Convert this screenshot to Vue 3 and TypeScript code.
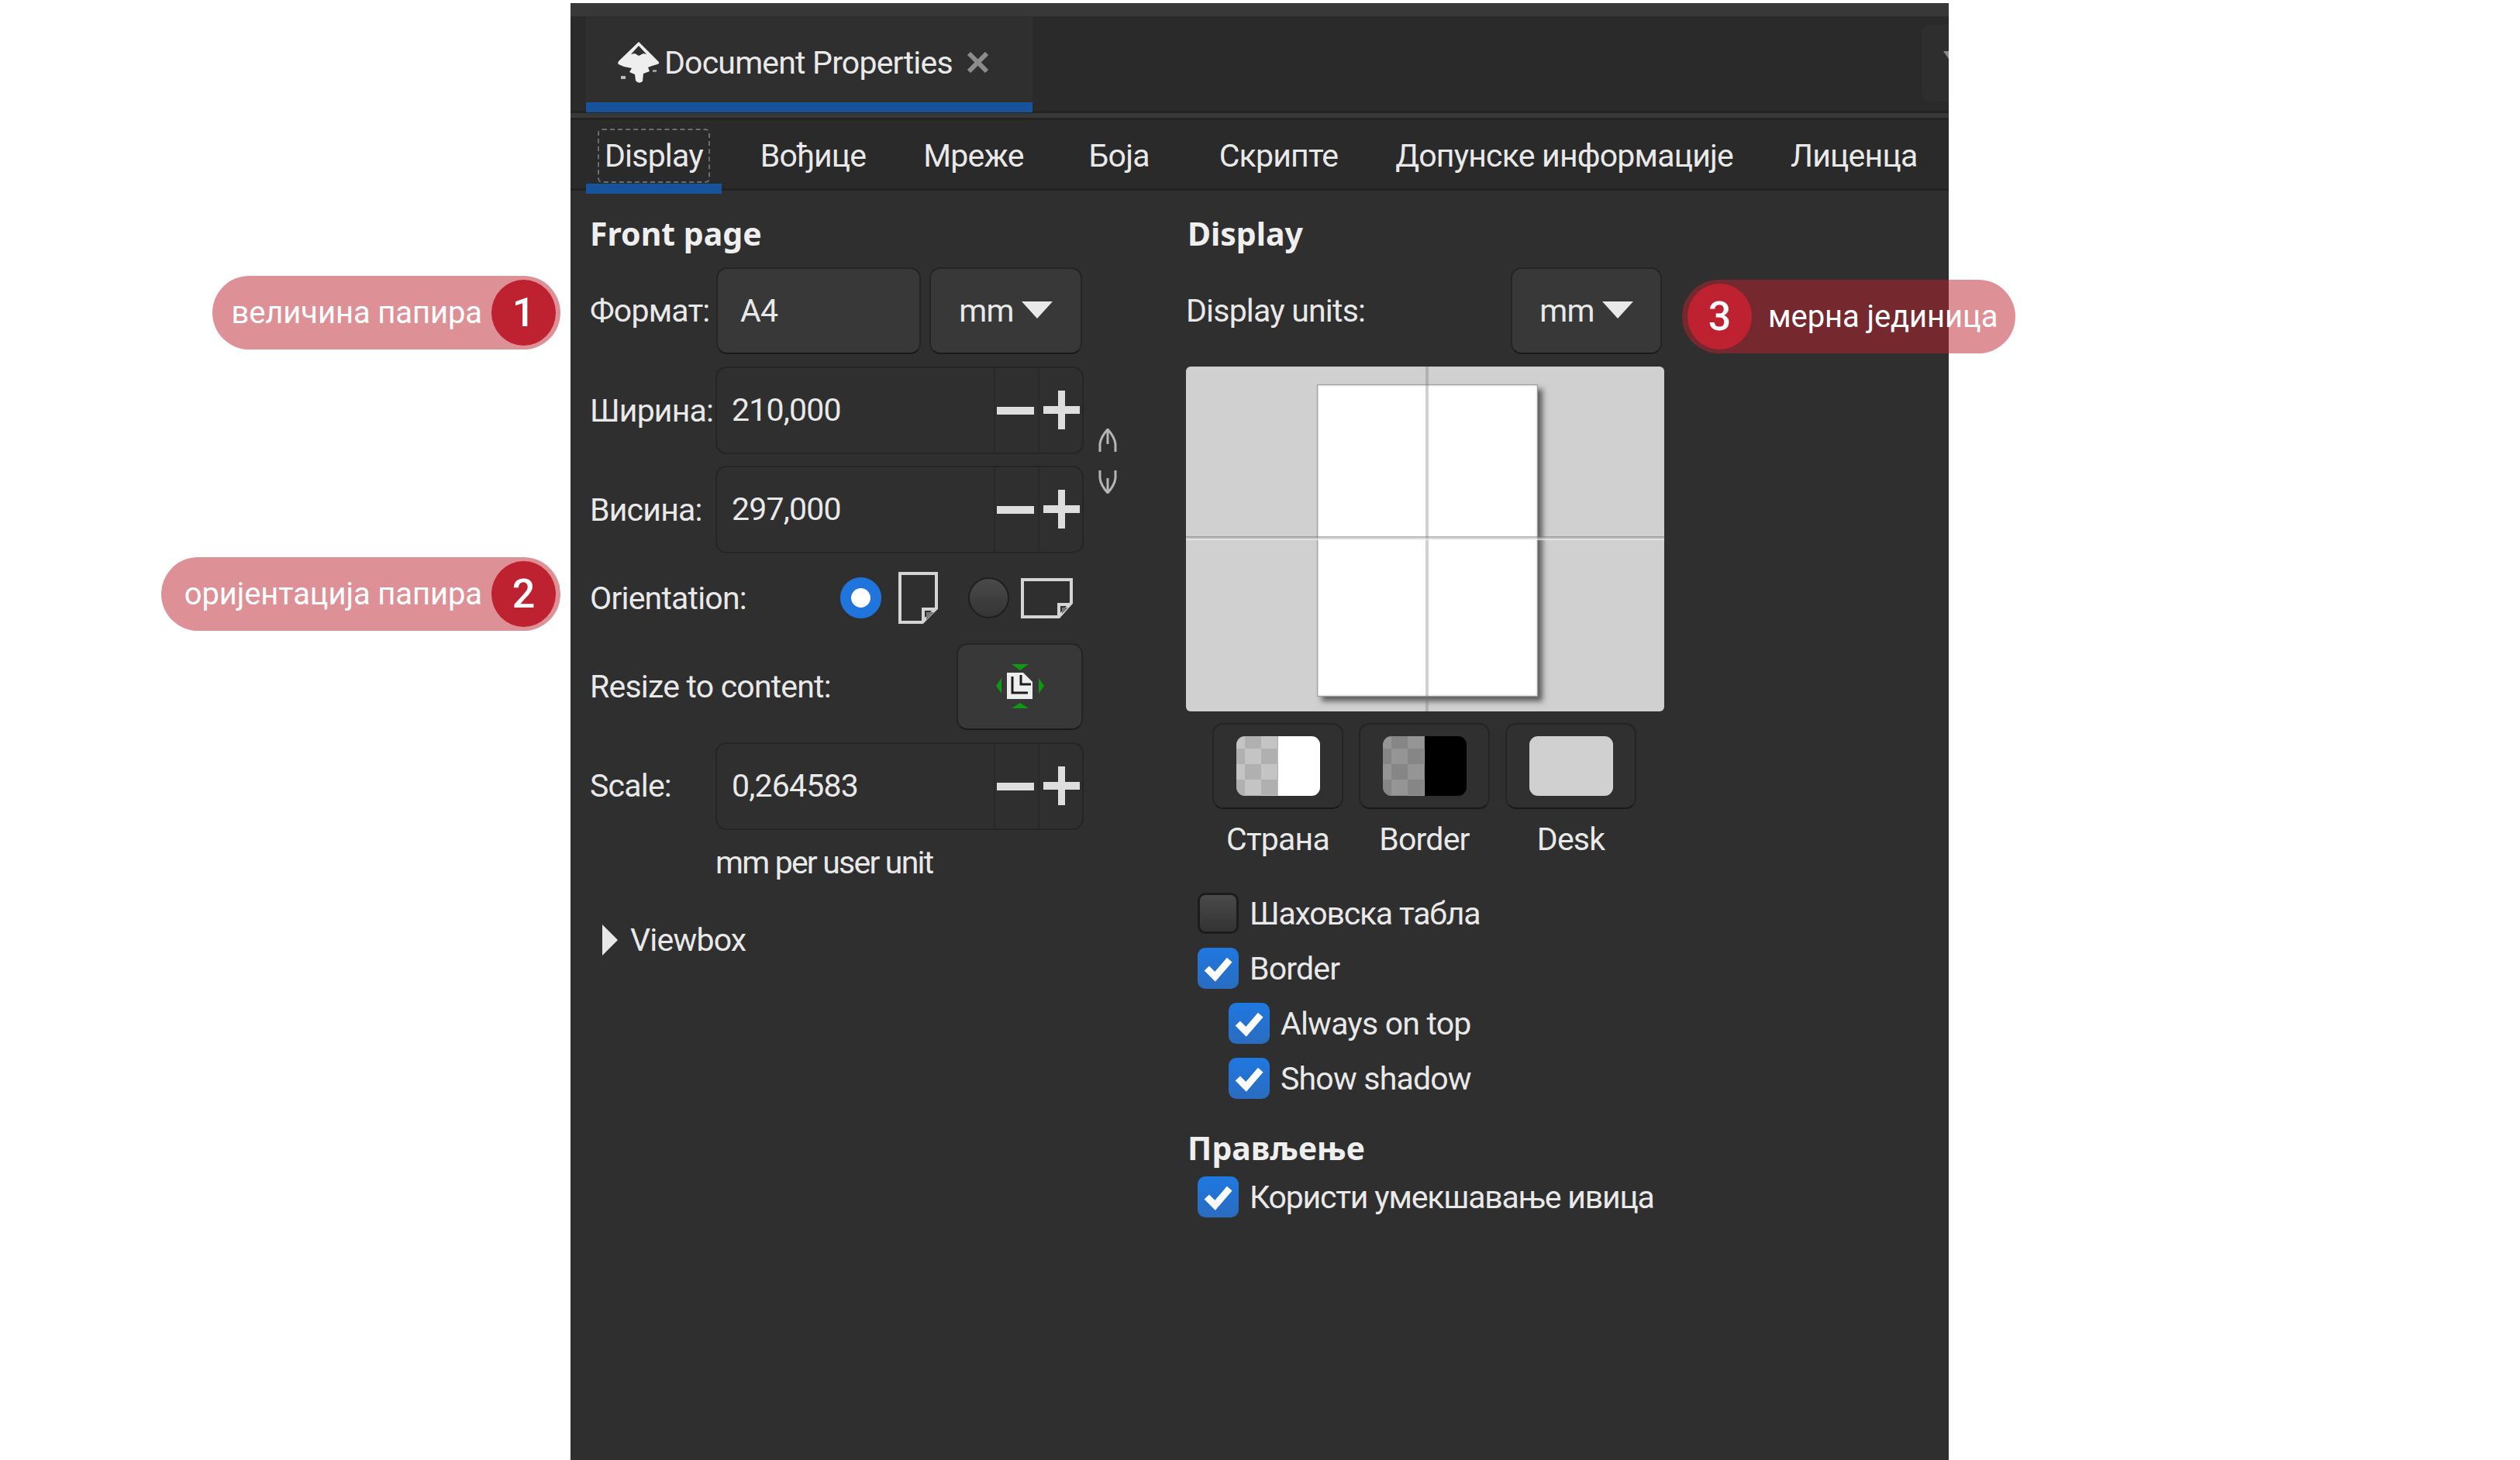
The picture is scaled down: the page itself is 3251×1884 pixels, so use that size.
<script setup lang="ts">
const tabs = [
  { label: 'Display', active: true },
  { label: 'Вођице' },
  { label: 'Мреже' },
  { label: 'Боја', wide: true },
  { label: 'Скрипте' },
  { label: 'Допунске информације' },
  { label: 'Лиценца' },
]
const spins = [
  { label: 'Ширина:', value: '210,000' },
  { label: 'Висина:', value: '297,000' },
]
const swatches = [
  { label: 'Страна', cls: 'sw-page' },
  { label: 'Border', cls: 'sw-border' },
  { label: 'Desk', cls: 'sw-desk' },
]
const borderChecks = [
  { label: 'Шаховска табла', checked: false, nested: false, tight: true },
  { label: 'Border', checked: true, nested: false, tight: false },
  { label: 'Always on top', checked: true, nested: true, tight: false },
  { label: 'Show shadow', checked: true, nested: true, tight: false },
]
</script>

<template>
  <div class="page">
    <div class="panel">
      <div class="strip"></div>
      <div class="dock-bar">
        <div class="dock-tab">
          <svg class="logo" viewBox="0 0 54 54" aria-hidden="true">
            <path d="M27 0 L52 25 Q55 28 51 29 L44 31 L39 33 L41 38 L33 41 L32 51 Q27 55 23 50 L22 42 L15 39 L18 34 L8 32 L1 29 Q-1 27 2 24 Z" fill="#eeeeee" />
            <path d="M27 5 L17 16 L22 15 L27 18 L33 15 L37 16 Z" fill="#2f2f2f" />
            <rect x="4" y="44" width="6" height="4" fill="#bbbbbb" />
            <rect x="45" y="36" width="5" height="3" fill="#999999" />
          </svg>
          <span class="dock-title">Document Properties</span>
          <svg class="close" viewBox="0 0 29 27" aria-hidden="true">
            <path d="M3 2 L26 25 M26 2 L3 25" stroke="#8c8c8c" stroke-width="6" fill="none" />
          </svg>
        </div>
        <div class="dock-spacer"></div>
        <div class="dock-menu"><i class="menu-caret"></i></div>
      </div>
      <div class="separator"></div>
      <div class="tabs">
        <div v-for="t in tabs" :key="t.label" class="tab" :class="{ active: t.active, wide: t.wide }">
          {{ t.label }}
        </div>
      </div>

      <div class="columns">
        <section class="col-left">
          <h3 class="heading">Front page</h3>
          <div class="row first-row">
            <span class="label">Формат:</span>
            <div class="field combo-entry">A4</div>
            <div class="field combo">
              <span>mm</span><i class="caret"></i>
            </div>
          </div>

          <div v-for="s in spins" :key="s.label" class="row spin-row">
            <span class="label">{{ s.label }}</span>
            <div class="spin">
              <span class="spin-value">{{ s.value }}</span>
              <span class="spin-btn"><i class="minus"></i></span>
              <span class="spin-btn"><i class="plus"></i></span>
            </div>
          </div>

          <div class="row orient-row">
            <span class="label">Orientation:</span>
            <span class="radio on"></span>
            <svg class="portrait" viewBox="0 0 51 67" aria-hidden="true">
              <path d="M2 2 H49 V47 L31 65 H2 Z" fill="none" stroke="#d4d4d4" stroke-width="4" />
              <path d="M32 64 V48 H48" fill="none" stroke="#d4d4d4" stroke-width="4" />
              <path d="M36 52 H46 L36 62 Z" fill="#777" />
            </svg>
            <span class="radio"></span>
            <svg class="landscape" viewBox="0 0 67 53" aria-hidden="true">
              <path d="M2 3 H65 V33 L49 51 H2 Z" fill="none" stroke="#d4d4d4" stroke-width="4" />
              <path d="M49 50 V35 H64" fill="none" stroke="#d4d4d4" stroke-width="4" />
              <path d="M53 39 H61 L53 47 Z" fill="#777" />
            </svg>
          </div>

          <div class="row resize-row">
            <span class="label">Resize to content:</span>
            <div class="field resize-btn">
              <svg viewBox="0 0 62 58" aria-hidden="true">
                <path d="M14 11 H35 L47 23 V45 H14 Z" fill="#eeeeee" />
                <path d="M21 16 V37 H41 M32 14 V26 H45" fill="none" stroke="#1c1c1c" stroke-width="3" />
                <path d="M20 0 H42 L31 8 Z M20 57 H42 L31 50 Z M7 18 V38 L0 28 Z M55 18 V38 L62 28 Z" fill="#0d9a12" />
              </svg>
            </div>
          </div>

          <div class="row scale-row">
            <span class="label">Scale:</span>
            <div class="spin">
              <span class="spin-value">0,264583</span>
              <span class="spin-btn"><i class="minus"></i></span>
              <span class="spin-btn"><i class="plus"></i></span>
            </div>
          </div>
          <div class="unit-note">mm per user unit</div>

          <div class="viewbox">
            <i class="arrow"></i>
            <span>Viewbox</span>
          </div>

          <svg class="chain chain-top" viewBox="0 0 26 30" aria-hidden="true">
            <path d="M3 30 V20 Q4 11 13 1 Q22 11 23 20 V30 M13 1 V20" fill="none" stroke="#b5b5b5" stroke-width="3" />
          </svg>
          <svg class="chain chain-bottom" viewBox="0 0 26 30" aria-hidden="true">
            <path d="M3 0 V10 Q4 19 13 29 Q22 19 23 10 V0 M13 29 V10" fill="none" stroke="#b5b5b5" stroke-width="3" />
          </svg>
        </section>

        <section class="col-right">
          <h3 class="heading">Display</h3>
          <div class="row first-row units-row">
            <span class="label">Display units:</span>
            <div class="field combo units">
              <span>mm</span><i class="caret"></i>
            </div>
          </div>

          <div class="preview">
            <div class="sheet"></div>
            <i class="guide-v"></i>
            <i class="guide-h"></i>
          </div>

          <div class="swatches">
            <div v-for="s in swatches" :key="s.label" class="swatch-item">
              <div class="field swatch-btn"><i class="swatch" :class="s.cls"></i></div>
              <span class="swatch-label">{{ s.label }}</span>
            </div>
          </div>

          <div class="checks">
            <label v-for="c in borderChecks" :key="c.label" class="check" :class="{ nested: c.nested, tight: c.tight }">
              <span class="box" :class="{ on: c.checked }">
                <svg v-if="c.checked" viewBox="0 0 54 54" aria-hidden="true">
                  <path d="M12 27 L23 38 L42 16" fill="none" stroke="#fff" stroke-width="9" />
                </svg>
              </span>
              {{ c.label }}
            </label>
          </div>

          <h3 class="heading render-heading">Прављење</h3>
          <label class="check tight">
            <span class="box on">
              <svg viewBox="0 0 54 54" aria-hidden="true">
                <path d="M12 27 L23 38 L42 16" fill="none" stroke="#fff" stroke-width="9" />
              </svg>
            </span>
            Користи умекшавање ивица
          </label>
        </section>
      </div>

      <div class="callout c1"><span class="c-text">величина папира</span><b class="c-num">1</b></div>
      <div class="callout c2"><span class="c-text">оријентација папира</span><b class="c-num">2</b></div>
      <div class="callout c3"><b class="c-num">3</b><span class="c-text">мерна јединица</span></div>
    </div>
  </div>
</template>

<style>
html,
body {
  margin: 0;
  background: #fff;
  overflow: hidden;
}
</style>

<style scoped>
.page {
  width: 3251px;
  height: 1884px;
  padding: 4px 0 0 736px;
  box-sizing: border-box;
  background: #fff;
  font-family: Roboto, "Noto Sans", sans-serif;
  font-size: 41px;
  letter-spacing: -0.8px;
  color: #e9e9e9;
}
.panel {
  position: relative;
  width: 1778px;
  height: 1880px;
  background: #2f2f2f;
}
.strip {
  height: 17px;
  background: #383838;
}
.dock-bar {
  display: flex;
  height: 122px;
  background: #2a2a2a;
  padding-left: 20px;
  border-bottom: 3px solid #232323;
}
.dock-tab {
  display: flex;
  align-items: center;
  width: 576px;
  height: 124px;
  box-sizing: border-box;
  padding: 8px 0 0 41px;
  background: #2f2f2f;
  border-bottom: 13px solid #17539b;
}
.logo {
  width: 54px;
  height: 54px;
  margin-right: 6px;
}
.dock-title {
  white-space: nowrap;
}
.close {
  width: 29px;
  height: 27px;
  margin-left: 18px;
}
.dock-spacer {
  flex: 1;
}
.dock-menu {
  position: relative;
  width: 35px;
  height: 99px;
  margin-top: 11px;
  background: #2e2e2e;
  border-radius: 10px 0 0 10px;
  overflow: hidden;
}
.menu-caret {
  position: absolute;
  left: 28px;
  top: 34px;
  width: 0;
  height: 0;
  border-style: solid;
  border-width: 10px 7px 0;
  border-color: #8a8a8a transparent transparent;
}
.separator {
  height: 6px;
  background: #383838;
  border-bottom: 3px solid #232323;
}
.tabs {
  display: flex;
  gap: 74px;
  height: 88px;
  padding-left: 44px;
  background: #2a2a2a;
  border-bottom: 3px solid #222;
  line-height: 93px;
  white-space: nowrap;
}
.tab {
  position: relative;
}
.tab.wide {
  margin: 0 16px 0 10px;
}
.tab.active::before {
  content: "";
  position: absolute;
  left: -9px;
  right: -9px;
  top: 11px;
  bottom: 7px;
  border: 2px dashed #6d6d6d;
  border-radius: 6px;
}
.tab.active::after {
  content: "";
  position: absolute;
  left: -24px;
  right: -24px;
  top: 82px;
  height: 13px;
  background: #17539b;
}
.columns {
  display: grid;
  grid-template-columns: 769px 617px;
  padding: 24px 0 0 25px;
}
.col-left,
.col-right {
  position: relative;
  min-width: 0;
}
.heading {
  margin: 0;
  height: 75px;
  line-height: 62px;
  font-family: "Noto Sans", Roboto, sans-serif;
  font-size: 41px;
  font-weight: 700;
  letter-spacing: 0;
  color: #efefef;
}
.col-right > .heading {
  padding-left: 2px;
}
.row {
  display: flex;
  align-items: center;
}
.label {
  white-space: nowrap;
}
.field {
  box-sizing: border-box;
  display: flex;
  align-items: center;
  background: #383838;
  border: 2px solid #242424;
  border-bottom-color: #1a1a1a;
  border-radius: 14px;
}
.first-row {
  height: 112px;
}
.first-row .label {
  width: 163px;
}
.combo-entry {
  width: 264px;
  height: 112px;
  padding-left: 29px;
}
.combo {
  justify-content: center;
  width: 197px;
  height: 112px;
  margin-left: 11px;
  gap: 10px;
}
.caret {
  width: 0;
  height: 0;
  margin-top: -2px;
  border-style: solid;
  border-width: 22px 20px 0;
  border-color: #e9e9e9 transparent transparent;
}
.spin-row,
.scale-row {
  height: 113px;
  margin-top: 16px;
}
.spin-row .label,
.scale-row .label {
  width: 162px;
}
.spin-row + .spin-row {
  margin-top: 15px;
}
.spin {
  display: flex;
  width: 475px;
  height: 113px;
  box-sizing: border-box;
  border: 2px solid #252525;
  border-radius: 14px;
  background: #2f2f2f;
}
.spin-value {
  flex: 1;
  padding-left: 19px;
  line-height: 108px;
}
.spin-btn {
  position: relative;
  width: 55px;
  border-left: 2px solid #292929;
}
.minus,
.plus,
.plus::after {
  position: absolute;
  background: #dedede;
}
.minus {
  left: 2px;
  width: 48px;
  top: 50px;
  height: 10px;
}
.plus {
  left: 5px;
  width: 47px;
  top: 49px;
  height: 10px;
}
.plus::after {
  content: "";
  left: 19px;
  width: 9px;
  top: -20px;
  height: 50px;
}
.orient-row {
  height: 67px;
  margin-top: 24px;
}
.orient-row .label {
  width: 323px;
}
.radio {
  width: 53px;
  height: 53px;
  box-sizing: border-box;
  border: 2px solid #1f1f1f;
  border-radius: 50%;
  background: linear-gradient(#4a4a4a, #343434);
}
.radio.on {
  border: 14px solid #1f75dc;
  background: #fff;
}
.portrait {
  width: 51px;
  height: 67px;
  margin: 0 39px 0 22px;
}
.landscape {
  width: 67px;
  height: 53px;
  margin-left: 15px;
}
.resize-row {
  height: 112px;
  margin-top: 25px;
}
.resize-row .label {
  width: 473px;
}
.resize-btn {
  justify-content: center;
  width: 163px;
  height: 112px;
}
.resize-btn svg {
  width: 62px;
  height: 58px;
}
.scale-row {
  height: 112px;
}
.unit-note {
  margin: 16px 0 0 162px;
  line-height: 54px;
  letter-spacing: -1.8px;
}
.viewbox {
  display: flex;
  align-items: center;
  margin: 46px 0 0 16px;
  gap: 16px;
  line-height: 54px;
}
.arrow {
  width: 0;
  height: 0;
  border-style: solid;
  border-width: 20px 0 20px 20px;
  border-color: transparent transparent transparent #e8e8e8;
}
.chain {
  position: absolute;
  left: 655px;
  width: 26px;
  height: 30px;
}
.chain-top {
  top: 283px;
}
.chain-bottom {
  top: 337px;
}
.units-row .label {
  width: 416px;
  box-sizing: border-box;
}
.units {
  width: 195px;
  margin-left: 3px;
}
.preview {
  position: relative;
  height: 445px;
  margin-top: 16px;
  border-radius: 6px;
  background: #d0d0d0;
  overflow: hidden;
}
.sheet {
  position: absolute;
  left: 170px;
  top: 24px;
  width: 283px;
  height: 401px;
  background: #fff;
  box-shadow: inset 0 0 2px 1px #ddd, 0 0 0 1px #9c9c9c, 6px 6px 7px 1px #5f5f5f;
}
.guide-v {
  position: absolute;
  left: 309px;
  top: 0;
  bottom: 0;
  width: 4px;
  background: rgba(120, 120, 120, 0.35);
}
.guide-h {
  position: absolute;
  left: 0;
  right: 0;
  top: 219px;
  height: 5px;
  background: linear-gradient(rgba(90, 90, 90, 0.5), rgba(255, 255, 255, 0.75));
}
.swatches {
  display: flex;
  gap: 20px;
  margin: 15px 0 0 34px;
}
.swatch-item {
  display: flex;
  flex-direction: column;
  align-items: center;
  width: 169px;
}
.swatch-btn {
  justify-content: center;
  width: 169px;
  height: 111px;
  background: #303030;
}
.swatch {
  width: 108px;
  height: 77px;
  border-radius: 11px;
}
.sw-page {
  background:
    linear-gradient(90deg, transparent 50%, #fff 50%),
    repeating-conic-gradient(#b0b0b0 0 25%, #c4c4c4 0 50%) -10px -4px / 42px 40px;
}
.sw-border {
  background:
    linear-gradient(90deg, transparent 50%, #000 50%),
    repeating-conic-gradient(#868686 0 25%, #959595 0 50%) -10px -4px / 42px 40px;
}
.sw-desk {
  background: #d0d0d0;
}
.swatch-label {
  margin-top: 12px;
  line-height: 54px;
}
.checks {
  display: flex;
  flex-direction: column;
  gap: 18px;
  margin-top: 42px;
}
.check {
  display: flex;
  align-items: center;
  gap: 14px;
  height: 53px;
  margin-left: 15px;
  white-space: nowrap;
}
.check.nested {
  margin-left: 55px;
  gap: 14px;
}
.check.tight {
  letter-spacing: -1.2px;
}
.box {
  flex: none;
  width: 53px;
  height: 53px;
  box-sizing: border-box;
  border: 3px solid #1c1c1c;
  border-radius: 10px;
  background: linear-gradient(#4a4a4a, #333);
}
.box.on {
  border: 0;
  background: linear-gradient(#1f78e0, #2a6cc0);
}
.box svg {
  display: block;
  width: 53px;
  height: 53px;
}
.render-heading {
  height: auto;
  margin-top: 32px;
  line-height: 62px;
  margin-bottom: 6px;
}
.callout {
  position: absolute;
  display: flex;
  align-items: center;
  box-sizing: border-box;
  height: 95px;
  border-radius: 48px;
  background: rgba(190, 33, 48, 0.5);
  color: #fff;
  font-family: Roboto, "Noto Sans", sans-serif;
  font-size: 40px;
  letter-spacing: -0.1px;
  white-space: nowrap;
}
.c-num {
  flex: none;
  width: 83px;
  height: 85px;
  line-height: 85px;
  text-align: center;
  border-radius: 50%;
  background: #be2130;
  font-size: 52px;
  font-weight: 500;
}
.c1,
.c2 {
  justify-content: flex-end;
  padding-right: 6px;
}
.c1 {
  left: -462px;
  top: 352px;
  width: 449px;
}
.c2 {
  left: -528px;
  top: 715px;
  width: 515px;
}
.c1 .c-text,
.c2 .c-text {
  margin-right: 12px;
}
.c3 {
  left: 1434px;
  top: 357px;
  width: 430px;
  padding-left: 7px;
}
.c3 .c-text {
  margin-left: 21px;
}
</style>
